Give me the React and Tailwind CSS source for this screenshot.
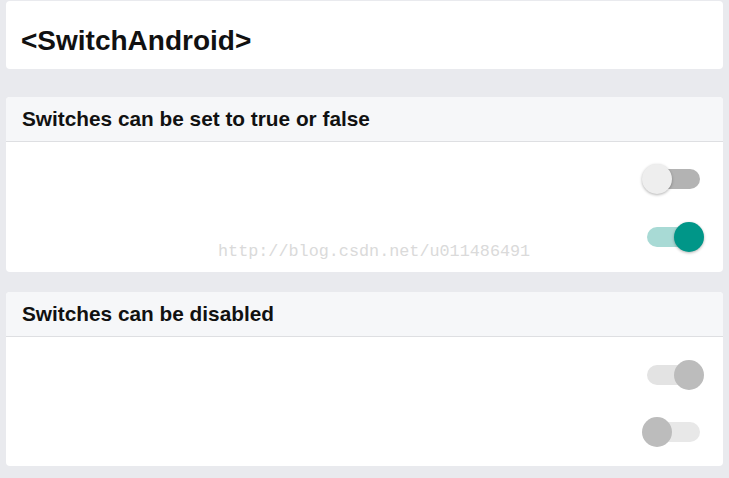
import React from 'react';

const Switch = ({ on, disabled }) => {
  const track = disabled
    ? on ? 'bg-[#e3e3e3]' : 'bg-[#e8e8e8]'
    : on ? 'bg-[#a8dad5]' : 'bg-[#b3b3b3]';
  const thumb = disabled
    ? 'bg-[#bcbcbc]'
    : on ? 'bg-[#009688]' : 'bg-[#eeeeee]';
  return (
    <div className="relative w-[62px] h-[32px]">
      <div className={`absolute left-[5px] right-[4px] top-[6px] h-[20px] rounded-full ${track}`} />
      <div
        className={`absolute top-[1px] w-[30px] h-[30px] rounded-full ${thumb} ${on ? 'right-0' : 'left-0'} ${disabled ? '' : 'shadow-[0_1px_3px_rgba(0,0,0,0.3)]'}`}
      />
    </div>
  );
};

const Section = ({ title, body, children }) => (
  <div className="bg-white rounded-[4px] overflow-hidden">
    <div className="h-[45px] bg-[#f6f7f9] border-b border-[#dedfe2] flex items-center px-[16px]">
      <span className="text-[20.8px] font-bold text-[#111]">{title}</span>
    </div>
    <div className={`flex flex-col items-end pr-[19px] ${body}`}>
      {children}
    </div>
  </div>
);

export default function App() {
  return (
    <div
      className="relative w-[729px] h-[478px] bg-[#e9eaee] px-[6px] pt-[1px] flex flex-col overflow-hidden"
      style={{ fontFamily: '"Liberation Sans", Arial, sans-serif' }}
    >
      <div className="bg-white rounded-[4px] h-[68px] flex items-center px-[15px] pt-[12px]">
        <span className="text-[28px] font-bold text-[#111]">&lt;SwitchAndroid&gt;</span>
      </div>
      <div className="mt-[28px]">
        <Section title="Switches can be set to true or false" body="pt-[21px] pb-[19px] gap-[26px]">
          <Switch on={false} />
          <Switch on />
        </Section>
      </div>
      <div className="mt-[20px]">
        <Section title="Switches can be disabled" body="pt-[22px] pb-[18px] gap-[25px]">
          <Switch on disabled />
          <Switch on={false} disabled />
        </Section>
      </div>
      <div
        className="absolute left-[218px] top-[239px] text-[16.8px] text-[#dadada] pointer-events-none"
        style={{ fontFamily: '"Liberation Mono", monospace' }}
      >
        http://blog.csdn.net/u011486491
      </div>
    </div>
  );
}
